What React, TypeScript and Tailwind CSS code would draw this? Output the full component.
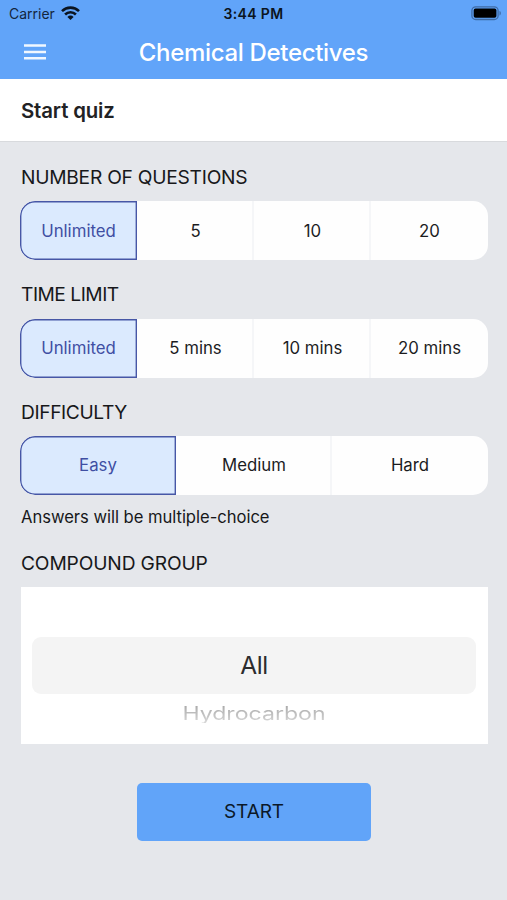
import React from "react";

type SegmentedProps = { options: string[]; columns: string; cell?: string };

function Segmented({ options, columns, cell = "" }: SegmentedProps) {
  return (
    <div
      className={`grid h-[59px] w-[468px] overflow-hidden rounded-[15px] bg-[#fefefe] text-[16.8px] text-[#1c1c1e] ${columns}`}
    >
      {options.map((option, i) => (
        <button
          key={option}
          className={`${cell} ${
            i === 0
              ? "rounded-l-[15px] bg-[#dbeafe] text-[#3f4fa3] inset-ring-[1.4px] inset-ring-[#4757a6]"
              : i === options.length - 1
                ? ""
                : "border-r-2 border-[#f5f6f8] pl-0.5"
          }`}
        >
          {option}
        </button>
      ))}
    </div>
  );
}

function Label({ children, className }: { children: string; className: string }) {
  return <h2 className={`h-6 text-[19.2px] leading-6 whitespace-nowrap ${className}`}>{children}</h2>;
}

function Wifi() {
  return (
    <svg className="mb-px ml-[6px] h-[14px] w-[19px]" viewBox="0 0 19 14" fill="none" stroke="#0b1420" strokeWidth="2.6">
      <path d="M1 5.1a12.2 12.2 0 0 1 17 0" />
      <path d="M4.1 8.5a7.7 7.7 0 0 1 10.8 0" />
      <path d="M9.5 14 6.4 10.9a4.4 4.4 0 0 1 6.2 0z" fill="#0b1420" stroke="none" />
    </svg>
  );
}

function Battery() {
  return (
    <svg className="h-[15px] w-[31px]" viewBox="0 0 31 15" fill="none">
      <rect x="0.9" y="0.9" width="26.2" height="12.6" rx="3.8" stroke="#3f6ba5" strokeWidth="1.3" />
      <rect x="2.7" y="2.6" width="22.7" height="9.2" rx="1.8" fill="#000" />
      <path d="M28.5 5c1.8.6 1.8 3.8 0 4.5z" fill="#3f6ba5" />
    </svg>
  );
}

function MenuIcon() {
  return (
    <svg className="h-[16px] w-[22px]" viewBox="0 0 22 16" stroke="#f1f7ff" strokeWidth="2.5">
      <path d="M0 1.6h22M0 8h22M0 14.3h22" />
    </svg>
  );
}

export default function App() {
  return (
    <div className="flex h-[900px] w-[507px] flex-col overflow-hidden bg-[#e5e7eb] font-['Inter',sans-serif] text-[#17181a]">
      <header className="h-[79px] bg-[#61a4f9]">
        <div className="grid h-[27px] grid-cols-3 items-center">
          <div className="flex items-center pl-[9px] text-[14px] text-[#14263e]">
            <span>Carrier</span>
            <Wifi />
          </div>
          <div className="text-center text-[14px] font-semibold tracking-[0.35px] text-[#0b1420]">3:44 PM</div>
          <div className="flex justify-end pr-[5px]">
            <Battery />
          </div>
        </div>
        <div className="grid h-[50px] grid-cols-[80px_1fr_80px] items-center">
          <button className="pl-[24px]" aria-label="Menu">
            <MenuIcon />
          </button>
          <h1 className="pt-px text-center text-[24px] font-medium tracking-[-0.32px] whitespace-nowrap text-white">
            Chemical Detectives
          </h1>
        </div>
      </header>
      <div className="flex h-[63px] items-center border-b border-[#d8dadd] bg-white pt-[2px] pl-[21px]">
        <span className="text-[20.4px] font-semibold tracking-[-0.15px] text-[#222224]">Start quiz</span>
      </div>
      <main className="flex flex-col pl-5">
        <Label className="mt-[23px] pl-px tracking-[-0.25px]">NUMBER OF QUESTIONS</Label>
        <div className="mt-3">
          <Segmented options={["Unlimited", "5", "10", "20"]} columns="grid-cols-4" cell="pt-0.5" />
        </div>
        <Label className="mt-[22px] pl-px tracking-[-0.5px]">TIME LIMIT</Label>
        <div className="mt-[13px]">
          <Segmented options={["Unlimited", "5 mins", "10 mins", "20 mins"]} columns="grid-cols-4" />
        </div>
        <Label className="mt-[22px] pl-px tracking-[-0.4px]">DIFFICULTY</Label>
        <div className="mt-3">
          <Segmented options={["Easy", "Medium", "Hard"]} columns="grid-cols-3" />
        </div>
        <p className="mt-[12px] h-5 pl-px text-[16.6px] leading-5 tracking-[-0.03px]">Answers will be multiple-choice</p>
        <Label className="mt-[24px] pl-px tracking-[-0.15px]">COMPOUND GROUP</Label>
        <div className="mt-[12px] ml-[0.5px] flex h-[156.5px] w-[467px] flex-col items-center bg-white pt-[50px]">
          <div className="flex h-[57px] w-[444px] items-center justify-center rounded-[9px] bg-[#f4f4f4] text-[24.5px] tracking-[-0.5px] text-[#2c2c2e]">
            All
          </div>
          <div className="mt-[8px] origin-center scale-y-[0.78] bg-gradient-to-b from-[#a8a8a8] to-[#d8d8d8] bg-clip-text text-[23.1px] leading-6 text-transparent">
            Hydrocarbon
          </div>
        </div>
        <button className="mt-[39.5px] ml-[117px] h-[58px] w-[234px] rounded-[5px] bg-[#61a4f9] pt-px text-[19px] tracking-[-0.1px] text-[#0b1828]">
          START
        </button>
      </main>
    </div>
  );
}
